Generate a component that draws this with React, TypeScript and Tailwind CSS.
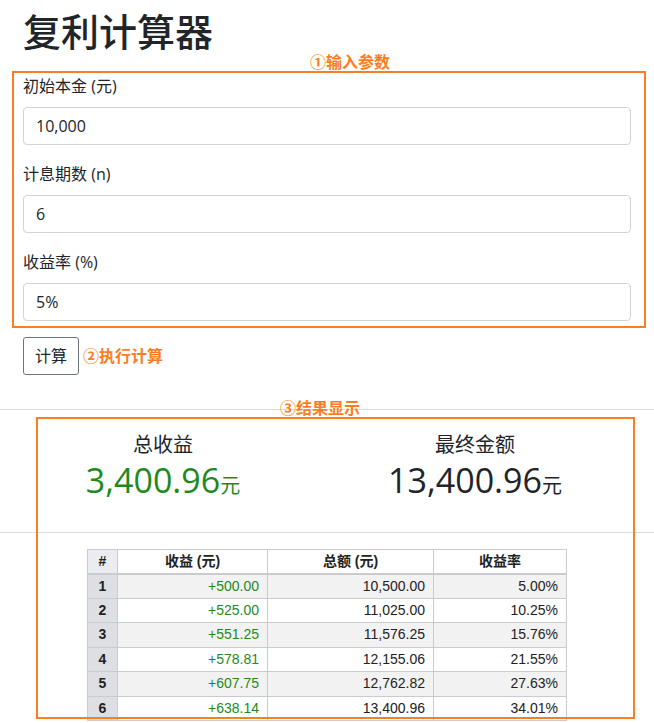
const rows = [
  ["1", "+500.00", "10,500.00", "5.00%"],
  ["2", "+525.00", "11,025.00", "10.25%"],
  ["3", "+551.25", "11,576.25", "15.76%"],
  ["4", "+578.81", "12,155.06", "21.55%"],
  ["5", "+607.75", "12,762.82", "27.63%"],
  ["6", "+638.14", "13,400.96", "34.01%"],
];

const font = { fontFamily: '"Open Sans", "Noto Sans CJK SC", sans-serif' };

function Field({ label, value }: { label: string; value: string }) {
  return (
    <div className="flex flex-col">
      <label className="text-[16px] leading-[24px] text-[#212529] mb-[9px]">{label}</label>
      <div className="h-[38px] border border-[#ced4da] rounded-[4px] px-[12px] flex items-center text-[16px] text-[#212529]">
        {value}
      </div>
    </div>
  );
}

export default function App() {
  return (
    <div className="relative w-[654px] h-[723px] bg-white overflow-hidden" style={font}>
      <h1 className="ml-[23px] pt-[4px] text-[38px] leading-[54px] font-medium text-[#212529]">复利计算器</h1>

      <div className="mt-[16px] ml-[23px] mr-[23px] flex flex-col gap-[17px]">
        <Field label="初始本金 (元)" value="10,000" />
        <Field label="计息期数 (n)" value="6" />
        <Field label="收益率 (%)" value="5%" />
      </div>

      <div className="ml-[23px] mt-[16px] flex items-center">
        <div className="h-[38px] px-[11px] border border-[#6c757d] rounded-[3px] flex items-center text-[16px] text-[#212529]">计算</div>
        <span className="ml-[4px] text-[16px] font-bold text-[#fd7e22]">②执行计算</span>
      </div>

      <div className="mt-[34px] border-t border-[#dcdcdc]" />

      <div className="ml-[7px] w-[624px] grid grid-cols-2 pt-[20px] pb-[26px] text-[#212529]">
        <div className="flex flex-col items-center">
          <div className="text-[20px] leading-[30px]">总收益</div>
          <div className="text-[#1e8a1e] text-[34px] leading-[40px]">3,400.96<span className="text-[20px]">元</span></div>
        </div>
        <div className="flex flex-col items-center">
          <div className="text-[20px] leading-[30px]">最终金额</div>
          <div className="text-[34px] leading-[40px]">13,400.96<span className="text-[20px]">元</span></div>
        </div>
      </div>

      <div className="border-t border-[#dcdcdc]" />

      <table className="ml-[87px] mt-[16px] w-[480px] border-collapse text-[14px] text-[#222]" style={{ fontFamily: '"Liberation Sans", "Noto Sans CJK SC", sans-serif' }}>
        <thead>
          <tr className="h-[24px] font-bold border-b-2 border-[#c8ccd1]">
            <th className="w-[30px] bg-[#eaecf0] border border-[#c8ccd1]">#</th>
            <th className="w-[150px] border border-[#c8ccd1]">收益 (元)</th>
            <th className="w-[166px] border border-[#c8ccd1]">总额 (元)</th>
            <th className="border border-[#c8ccd1]">收益率</th>
          </tr>
        </thead>
        <tbody>
          {rows.map((r, i) => (
            <tr key={r[0]} className={"h-[24.5px] " + (i % 2 === 0 ? "bg-[#f2f2f2]" : "bg-white")}>
              <td className="text-center font-bold bg-[#dddfe3] border border-[#c8ccd1]">{r[0]}</td>
              <td className="text-right pr-[8px] text-[#1e8a1e] border border-[#c8ccd1]">{r[1]}</td>
              <td className="text-right pr-[8px] border border-[#c8ccd1]">{r[2]}</td>
              <td className="text-right pr-[8px] border border-[#c8ccd1]">{r[3]}</td>
            </tr>
          ))}
        </tbody>
      </table>

      {/* annotation boxes */}
      <div className="absolute left-[12px] top-[71px] w-[634px] h-[257px] border-2 border-[#fd7e22]" />
      <div className="absolute left-[310px] top-[50px] text-[16px] font-bold text-[#fd7e22]">①输入参数</div>
      <div className="absolute left-[36px] top-[417px] w-[599px] h-[302px] border-2 border-[#fd7e22]" />
      <div className="absolute left-[280px] top-[396px] text-[16px] font-bold text-[#fd7e22]">③结果显示</div>
    </div>
  );
}
